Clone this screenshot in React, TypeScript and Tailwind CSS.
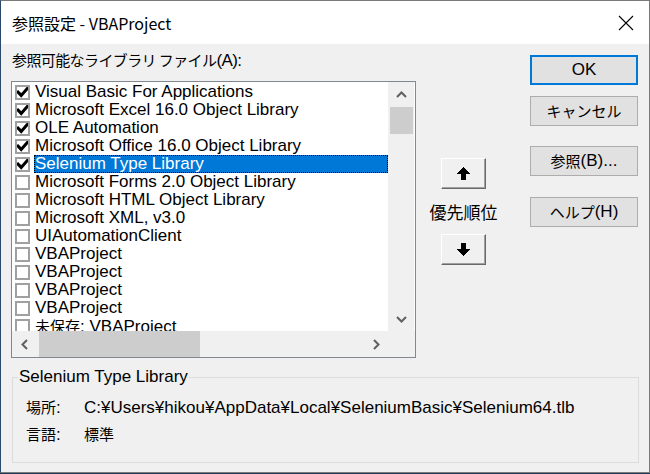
import React from "react";

const rows: { t: string; c?: boolean; sel?: boolean; jp?: string }[] = [
  { t: "Visual Basic For Applications", c: true },
  { t: "Microsoft Excel 16.0 Object Library", c: true },
  { t: "OLE Automation", c: true },
  { t: "Microsoft Office 16.0 Object Library", c: true },
  { t: "Selenium Type Library", c: true, sel: true },
  { t: "Microsoft Forms 2.0 Object Library" },
  { t: "Microsoft HTML Object Library" },
  { t: "Microsoft XML, v3.0" },
  { t: "UIAutomationClient" },
  { t: "VBAProject" },
  { t: "VBAProject" },
  { t: "VBAProject" },
  { t: "VBAProject" },
  { t: ": VBAProject", jp: "未保存" },
];

const J = ({ children }: { children: React.ReactNode }) => (
  <span className="font-['Noto_Sans_CJK_JP',sans-serif] text-[15px]">{children}</span>
);

const Check = () => (
  <svg width="11" height="11" viewBox="0 0 11 11">
    <path d="M1 5 L4.2 8.4 L10.2 1.6" stroke="#000" strokeWidth="3" fill="none" strokeLinecap="square" />
  </svg>
);

const Chevron = ({ dir }: { dir: "up" | "down" | "left" | "right" }) => {
  const d =
    dir === "up"
      ? "M1 7 L5.5 2.5 L10 7"
      : dir === "down"
      ? "M1 3 L5.5 7.5 L10 3"
      : dir === "left"
      ? "M7 1 L2.5 5.5 L7 10"
      : "M3 1 L7.5 5.5 L3 10";
  return (
    <svg width="11" height="11" viewBox="0 0 11 11">
      <path d={d} stroke="#606060" strokeWidth="2" fill="none" />
    </svg>
  );
};

const ArrowBtn = ({ up }: { up: boolean }) => (
  <div className="w-[45px] h-[31px] bg-[#f0f0f0] border border-t-white border-l-white border-r-[#696969] border-b-[#696969] shadow-[inset_-1px_-1px_0_#a0a0a0] flex items-center justify-center">
    <svg width="13" height="13" viewBox="0 0 13 13" shapeRendering="crispEdges">
      {up ? (
        <path d="M6.5 0 L13 7 L9 7 L9 13 L4 13 L4 7 L0 7 Z" fill="#000" />
      ) : (
        <path d="M6.5 13 L13 6 L9 6 L9 0 L4 0 L4 6 L0 6 Z" fill="#000" />
      )}
    </svg>
  </div>
);

const Btn = ({ children, primary, cls }: { children: React.ReactNode; primary?: boolean; cls: string }) => (
  <div
    className={
      (primary ? "border-2 border-[#0078d7] " : "border border-[#adadad] ") +
      "w-[108px] h-[30px] bg-[#e1e1e1] flex items-center justify-center text-[#000] " +
      cls
    }
  >
    {children}
  </div>
);

export default function App() {
  return (
    <div className="w-[650px] h-[474px] bg-[#1d3b5c]">
      <div className="w-[650px] h-[473px] flex flex-col border border-[#7a7a7a] border-l-[#2b4a6b] font-['Liberation_Sans','Noto_Sans_CJK_JP',sans-serif] text-[17px] text-black">
        {/* title bar */}
        <div className="h-[43px] bg-white flex items-center justify-between pl-[11px] pr-[15px] shrink-0">
          <div className="font-['Noto_Sans_CJK_JP',sans-serif] text-[16px] leading-[20px] text-[#000] pt-[1px]">
            参照設定 - VBAProject
          </div>
          <svg width="16" height="16" viewBox="0 0 16 16">
            <path d="M1 1 L15 15 M15 1 L1 15" stroke="#000" strokeWidth="1.1" fill="none" />
          </svg>
        </div>

        {/* body */}
        <div className="flex-1 bg-[#f0f0f0] flex flex-col">
          <div className="flex">
            {/* left column */}
            <div className="ml-[10px] w-[405px] pt-[5px]">
              <div className="h-[22px] leading-[22px] pl-[1px] tracking-[-0.6px]">
                <J>参照可能なライブラリ ファイル</J>(A):
              </div>
              <div className="mt-[10px] w-[405px] h-[277px] border border-[#828790] bg-white flex flex-col">
                <div className="flex h-[249px]">
                  <div className="w-[376px] pt-[1px] overflow-hidden">
                    {rows.map((r, i) => (
                      <div key={i} className="h-[18px] flex items-center pl-[3px] whitespace-nowrap">
                        <div className="w-[15px] h-[15px] border-2 border-[#a0a0a0] bg-white flex items-center justify-center shrink-0">
                          {r.c && <Check />}
                        </div>
                        <div
                          className={
                            "ml-[4px] h-[18px] leading-[18px] flex-1 pl-[1px] " +
                            (r.sel ? "bg-[#0078d7] text-white outline outline-1 outline-dotted outline-[#000] -outline-offset-1" : "")
                          }
                        >
                          {r.jp && <J>{r.jp}</J>}
                          {r.t}
                        </div>
                      </div>
                    ))}
                  </div>
                  <div className="w-[26px] bg-[#f0f0f0] flex flex-col items-center">
                    <div className="h-[25px] flex items-center justify-center pt-[2px]">
                      <Chevron dir="up" />
                    </div>
                    <div className="w-[23px] h-[27px] bg-[#cdcdcd]" />
                    <div className="flex-1" />
                    <div className="h-[24px] flex items-center justify-center">
                      <Chevron dir="down" />
                    </div>
                  </div>
                </div>
                <div className="flex h-[26px] bg-[#f0f0f0]">
                  <div className="w-[27px] flex items-center justify-center">
                    <Chevron dir="left" />
                  </div>
                  <div className="w-[161px] h-[26px] bg-[#cdcdcd]" />
                  <div className="flex-1" />
                  <div className="w-[26px] flex items-center justify-center mr-[26px]">
                    <Chevron dir="right" />
                  </div>
                </div>
              </div>
            </div>

            {/* middle column */}
            <div className="w-[95px] flex flex-col items-center pt-[114px]">
              <ArrowBtn up={true} />
              <div className="mt-[12px] h-[22px] leading-[22px] font-['Noto_Sans_CJK_JP',sans-serif] text-[17px]">優先順位</div>
              <div className="mt-[11px]">
                <ArrowBtn up={false} />
              </div>
            </div>

            {/* right column */}
            <div className="ml-[19px] flex flex-col pt-[11px]">
              <Btn primary cls="h-[30px]">OK</Btn>
              <Btn cls="mt-[11px] h-[29px]">
                <J>キャンセル</J>
              </Btn>
              <Btn cls="mt-[20px] h-[29px]">
                <J>参照</J>(B)...
              </Btn>
              <Btn cls="mt-[21px] h-[29px]">
                <J>ヘルプ</J>(H)
              </Btn>
            </div>
          </div>

          {/* group box */}
          <fieldset className="mt-[9px] ml-[11px] w-[627px] h-[96px] border border-[#dcdcdc] pl-[5px] pr-[5px]">
            <legend className="px-[1px] leading-[20px] text-[17px]">Selenium Type Library</legend>
            <div className="pl-[8px] pt-[7px]">
              <div className="h-[27px] flex items-center">
                <div className="w-[58px]">
                  <J>場所</J>:
                </div>
                <div className="whitespace-nowrap">C:¥Users¥hikou¥AppData¥Local¥SeleniumBasic¥Selenium64.tlb</div>
              </div>
              <div className="h-[27px] flex items-center">
                <div className="w-[58px]">
                  <J>言語</J>:
                </div>
                <div>
                  <J>標準</J>
                </div>
              </div>
            </div>
          </fieldset>
        </div>
      </div>
    </div>
  );
}
